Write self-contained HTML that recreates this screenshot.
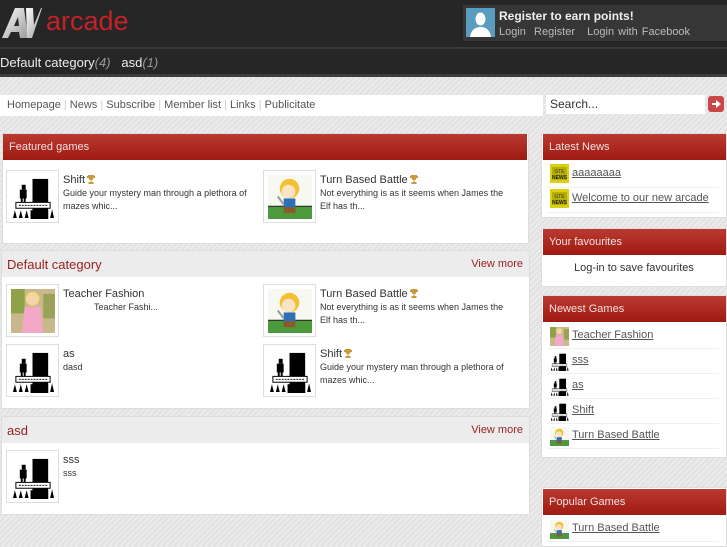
<!DOCTYPE html>
<html><head><meta charset="utf-8"><style>
*{margin:0;padding:0;box-sizing:border-box}
body{width:727px;height:545px;overflow:hidden;font-family:"Liberation Sans",sans-serif;background:repeating-linear-gradient(135deg,#e2e2e2 0 2px,#ebebeb 2px 4px);position:relative;color:#333}
.a{position:absolute}
.top{left:0;top:0;width:727px;height:49px;background:#262626}
.nav{left:0;top:47px;width:727px;height:30px;background:#262626;border-top:2px solid #3a3a3a;border-bottom:3px solid #3c3c3c}
.box{background:#fff;border:1px solid #ddd}
.rh{background:linear-gradient(#bb3a30,#9e1a12);color:#f4e0de;font-size:11px;padding-left:6px;display:flex;align-items:center}
.gh{background:#ececec;color:#9a1e1e;font-size:13px;padding-left:5px;display:flex;align-items:center;justify-content:space-between;padding-right:6px}
.gh span{font-size:11px}
.th{position:absolute;width:53px;height:53px;border:1px solid #ddd;background:#fff;padding:4px}
.t1{position:absolute;font-size:11px;color:#333}
.t2{position:absolute;font-size:9px;line-height:13px;color:#333}
.ri{position:absolute;left:552px;font-size:11px;color:#555;text-decoration:underline}
.ic{position:absolute;left:550px;width:19px;height:19px}
.sep{position:absolute;left:547px;width:172px;height:1px;background:#f0f0f0}
.tro{display:inline-block;width:8px;height:9px;vertical-align:-1px;margin-left:2px}
</style></head><body>
<svg width="0" height="0" style="position:absolute"><defs>
<symbol id="shift" viewBox="0 0 45 45"><rect width="45" height="45" fill="#fff"/><rect x="22" y="4" width="16" height="41" fill="#000"/><rect x="11" y="10" width="4" height="5" fill="#000"/><rect x="9" y="15" width="7" height="9" fill="#000"/><rect x="10" y="24" width="2" height="7" fill="#000"/><rect x="13" y="24" width="2" height="7" fill="#000"/><rect x="5" y="28" width="35" height="6" fill="#fff" stroke="#000" stroke-width="1"/><path d="M8 31h29" stroke="#000" stroke-width="1" stroke-dasharray="2 1"/><path d="M2 44l2-8 2 8zM8 44l2-8 2 8zM14 44l2-8 2 8zM40 44l2-9 2 9z" fill="#000"/><rect x="20" y="36" width="18" height="9" fill="#000"/></symbol>
<symbol id="battle" viewBox="0 0 45 45"><rect width="45" height="45" fill="#f8f8f2"/><rect y="32" width="45" height="13" fill="#4c9a3c"/><path d="M0 32h45" stroke="#222" stroke-width="1"/><circle cx="22" cy="14" r="10" fill="#f2c030"/><circle cx="21" cy="17" r="7" fill="#fbe3c6"/><rect x="16" y="24" width="12" height="10" fill="#2f6fb6"/><rect x="16" y="33" width="12" height="6" fill="#8a5a2a"/><path d="M10 22l6 8" stroke="#999" stroke-width="2"/></symbol>
<symbol id="teacher" viewBox="0 0 45 45"><rect width="45" height="45" fill="#c9b98a"/><rect x="0" y="0" width="14" height="25" fill="#8fa24a"/><rect x="33" y="5" width="12" height="25" fill="#9aa25a"/><circle cx="22" cy="10" r="7" fill="#f2d88a"/><circle cx="22" cy="11" r="4" fill="#f5d2b8"/><path d="M14 18h16l3 27H11z" fill="#f4a8c8"/></symbol>
<symbol id="news" viewBox="0 0 19 19"><rect width="19" height="19" fill="#d8d010"/><rect x="2" y="3" width="15" height="13" fill="#b8b000"/><text x="9.5" y="9" font-size="5" text-anchor="middle" fill="#333" font-family="Liberation Sans">GTE</text><text x="9.5" y="15" font-size="5" text-anchor="middle" fill="#222" font-weight="bold" font-family="Liberation Sans">NEWS</text></symbol>
<symbol id="trophy" viewBox="0 0 8 9"><path d="M1 0h6v1h1v2h-1.5l-1 2h-1v2h2v2h-5v-2h2v-2h-1l-1-2h-1.5v-2h1z" fill="#c89a3a"/></symbol>
</defs></svg>

<div class="a top"></div>
<div class="a nav"></div>
<svg class="a" style="left:2px;top:7px" width="40" height="32"><defs><linearGradient id="lg" x1="0" y1="0" x2="1" y2="1"><stop offset="0" stop-color="#fff"/><stop offset="1" stop-color="#9a9a9a"/></linearGradient></defs><path d="M0 31L13 1h9l4 30h-8l-1-6h-8l-3 6zM12 19h5l-1-9z" fill="url(#lg)"/><path d="M24 1h7l1 17L39 1h1L30 31h-5z" fill="url(#lg)"/></svg>
<div class="a" style="left:46px;top:5px;font-size:27px;color:#c42128;line-height:32px">arcade</div>
<div class="a" style="left:463px;top:5px;width:264px;height:36px;background:#363636"></div>
<div class="a" style="left:466px;top:8px;width:29px;height:29px;background:#5a9cbf;overflow:hidden"><svg width="29" height="29"><ellipse cx="14.5" cy="11" rx="5" ry="6.5" fill="#fff"/><path d="M4 29c1-7 5-10 10.5-10s9.5 3 10.5 10z" fill="#fff"/></svg></div>
<div class="a" style="left:499px;top:9px;font-size:12px;font-weight:bold;color:#f0f0f0">Register to earn points!</div>
<div class="a" style="left:499px;top:26px;font-size:11px;color:#bbb;word-spacing:1px">Login&nbsp; Register &nbsp; Login with Facebook</div>
<div class="a" style="left:0;top:55px;font-size:13px;color:#eee">Default category<i style="color:#999">(4)</i>&nbsp;&nbsp; asd<i style="color:#999">(1)</i></div>

<div class="a" style="left:0;top:95px;width:543px;height:21px;background:#fff;font-size:11px;color:#555;padding:4px 0 0 7px;word-spacing:0">Homepage <span style="color:#ccc">|</span> News <span style="color:#ccc">|</span> Subscribe <span style="color:#ccc">|</span> Member list <span style="color:#ccc">|</span> Links <span style="color:#ccc">|</span> Publicitate</div>
<div class="a" style="left:546px;top:95px;width:159px;height:19px;background:#fff;font-size:12px;color:#333;padding:2px 0 0 4px">Search...</div>
<div class="a" style="left:708px;top:96px;width:16px;height:16px;background:#c8484a;border-radius:3px"><svg width="16" height="16"><path d="M4 7h4V4l5 4-5 4V9H4z" fill="#fff"/></svg></div>

<div class="a box" style="left:2px;top:133px;width:527px;height:111px"></div>
<div class="a rh" style="left:3px;top:134px;width:524px;height:26px">Featured games</div>
<div class="th" style="left:6px;top:170px"><svg width="44" height="44"><use href="#shift"/></svg></div>
<div class="t1" style="left:63px;top:174px">Shift<svg class="tro"><use href="#trophy"/></svg></div>
<div class="t2" style="left:63px;top:187px;width:190px">Guide your mystery man through a plethora of mazes whic...</div>
<div class="th" style="left:263px;top:170px"><svg width="44" height="44"><use href="#battle"/></svg></div>
<div class="t1" style="left:320px;top:174px">Turn Based Battle<svg class="tro"><use href="#trophy"/></svg></div>
<div class="t2" style="left:320px;top:187px;width:195px">Not everything is as it seems when James the Elf has th...</div>

<div class="a box" style="left:1px;top:250px;width:529px;height:159px"></div>
<div class="a gh" style="left:2px;top:251px;width:527px;height:26px">Default category<span>View more</span></div>
<div class="th" style="left:6px;top:284px"><svg width="44" height="44"><use href="#teacher"/></svg></div>
<div class="t1" style="left:63px;top:288px">Teacher Fashion</div>
<div class="t2" style="left:94px;top:301px">Teacher Fashi...</div>
<div class="th" style="left:263px;top:284px"><svg width="44" height="44"><use href="#battle"/></svg></div>
<div class="t1" style="left:320px;top:288px">Turn Based Battle<svg class="tro"><use href="#trophy"/></svg></div>
<div class="t2" style="left:320px;top:301px;width:195px">Not everything is as it seems when James the Elf has th...</div>
<div class="th" style="left:6px;top:344px"><svg width="44" height="44"><use href="#shift"/></svg></div>
<div class="t1" style="left:63px;top:348px">as</div>
<div class="t2" style="left:63px;top:361px">dasd</div>
<div class="th" style="left:263px;top:344px"><svg width="44" height="44"><use href="#shift"/></svg></div>
<div class="t1" style="left:320px;top:348px">Shift<svg class="tro"><use href="#trophy"/></svg></div>
<div class="t2" style="left:320px;top:361px;width:195px">Guide your mystery man through a plethora of mazes whic...</div>

<div class="a box" style="left:1px;top:416px;width:529px;height:99px"></div>
<div class="a gh" style="left:2px;top:417px;width:527px;height:26px">asd<span>View more</span></div>
<div class="th" style="left:6px;top:450px"><svg width="44" height="44"><use href="#shift"/></svg></div>
<div class="t1" style="left:63px;top:454px">sss</div>
<div class="t2" style="left:63px;top:467px">sss</div>

<div class="a box" style="left:541px;top:133px;width:186px;height:85px"></div>
<div class="a rh" style="left:543px;top:134px;width:183px;height:26px">Latest News</div>
<svg class="ic" style="top:164px"><use href="#news"/></svg><div class="ri" style="left:572px;top:167px">aaaaaaaa</div>
<div class="sep" style="top:187px"></div>
<svg class="ic" style="top:189px"><use href="#news"/></svg><div class="ri" style="left:572px;top:192px">Welcome to our new arcade</div>
<div class="sep" style="top:212px"></div>

<div class="a box" style="left:541px;top:228px;width:186px;height:59px"></div>
<div class="a rh" style="left:543px;top:229px;width:183px;height:26px">Your favourites</div>
<div class="a" style="left:541px;top:262px;width:186px;text-align:center;font-size:11px;color:#333">Log-in to save favourites</div>

<div class="a box" style="left:541px;top:295px;width:186px;height:163px"></div>
<div class="a rh" style="left:543px;top:296px;width:183px;height:26px">Newest Games</div>
<svg class="ic" style="top:327px" viewBox="0 0 45 45"><use href="#teacher"/></svg><div class="ri" style="left:572px;top:329px">Teacher Fashion</div>
<div class="sep" style="top:348px"></div>
<svg class="ic" style="top:352px" viewBox="0 0 45 45"><use href="#shift"/></svg><div class="ri" style="left:572px;top:354px">sss</div>
<div class="sep" style="top:373px"></div>
<svg class="ic" style="top:377px" viewBox="0 0 45 45"><use href="#shift"/></svg><div class="ri" style="left:572px;top:379px">as</div>
<div class="sep" style="top:398px"></div>
<svg class="ic" style="top:402px" viewBox="0 0 45 45"><use href="#shift"/></svg><div class="ri" style="left:572px;top:404px">Shift</div>
<div class="sep" style="top:423px"></div>
<svg class="ic" style="top:427px" viewBox="0 0 45 45"><use href="#battle"/></svg><div class="ri" style="left:572px;top:429px">Turn Based Battle</div>
<div class="sep" style="top:448px"></div>

<div class="a box" style="left:541px;top:487px;width:186px;height:60px"></div>
<div class="a rh" style="left:543px;top:489px;width:183px;height:26px">Popular Games</div>
<svg class="ic" style="top:520px" viewBox="0 0 45 45"><use href="#battle"/></svg><div class="ri" style="left:572px;top:522px">Turn Based Battle</div>
<div class="sep" style="top:541px"></div>
</body></html>
